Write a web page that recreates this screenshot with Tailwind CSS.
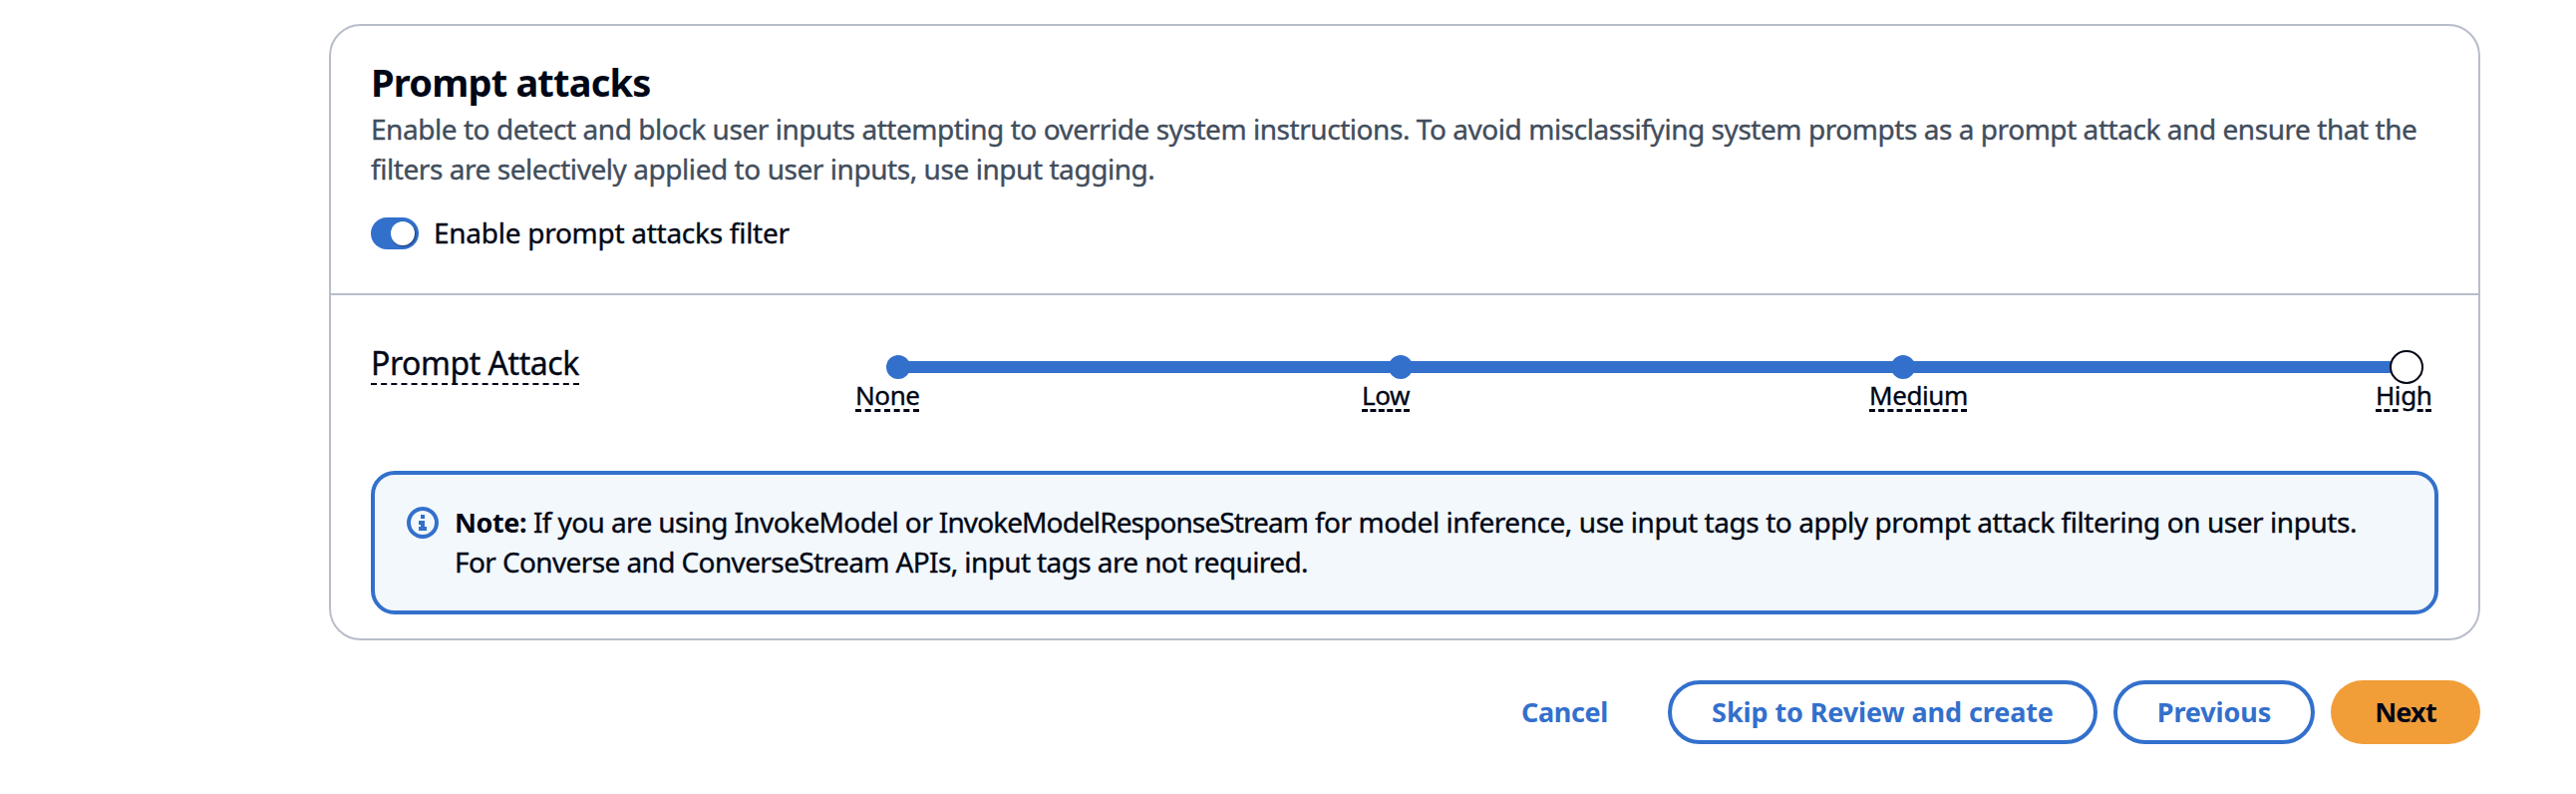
<!DOCTYPE html>
<html lang="en">
<head>
<meta charset="utf-8">
<title>Prompt attacks</title>
<script src="https://cdn.jsdelivr.net/npm/@tailwindcss/browser@4"></script>
</head>
<body class="bg-white font-['Noto_Sans',sans-serif] text-[28px] leading-10 text-[#000716] [-webkit-text-stroke:0.35px]">
<main class="ml-[330px] w-[2158px] pt-6">
  <section class="h-[618px] rounded-[32px] border-2 border-[#b8bdca]">
    <header class="h-[270px] border-b-2 border-[#b8bdca] px-10 pt-8">
      <h2 class="text-[38px] leading-12 font-bold tracking-[-0.8px] whitespace-nowrap [-webkit-text-stroke:0]">Prompt attacks</h2>
      <p class="mt-[3px] text-[#414d5c] whitespace-nowrap"><span class="tracking-[-0.45px]">Enable to detect and block user inputs attempting to override system instructions. To avoid misclassifying system prompts as a prompt attack and ensure that the</span><br><span class="tracking-[-0.44px]">filters are selectively applied to user inputs, use input tagging.</span></p>
      <label class="mt-6 flex items-center">
        <span class="mt-[2px] flex h-8 w-12 items-center justify-end rounded-full bg-[#3370cc] pr-1"><span class="size-6 rounded-full bg-white shadow-[1px_1px_2px_rgba(0,7,22,0.5)]"></span></span>
        <span class="ml-[15px] tracking-[-0.27px]">Enable prompt attacks filter</span>
      </label>
    </header>
    <div class="px-10">
      <div class="flex h-[176px]">
        <div class="w-[486px] shrink-0 pt-[45px]">
          <span class="inline-block h-[45px] border-b-2 border-dashed border-[#000716] text-[32px] leading-[46px] tracking-[-0.45px]">Prompt Attack</span>
        </div>
        <div class="w-[1588px] shrink-0 pt-[55px]">
          <div class="ml-[31px] flex h-[34px] w-[1542px] items-center">
            <div class="size-6 shrink-0 rounded-full bg-[#3370cc]"></div>
            <div class="-mx-1 h-3 w-[488px] shrink-0 bg-[#3370cc]"></div>
            <div class="size-6 shrink-0 rounded-full bg-[#3370cc]"></div>
            <div class="-mx-1 h-3 w-[488px] shrink-0 bg-[#3370cc]"></div>
            <div class="size-6 shrink-0 rounded-full bg-[#3370cc]"></div>
            <div class="-mx-1 h-3 flex-1 bg-[#3370cc]"></div>
            <div class="z-10 size-[34px] shrink-0 rounded-full border-2 border-[#000716] bg-white"></div>
          </div>
          <div class="-mt-[9px] grid grid-cols-[508px_509px_508px_63px] text-[26px] tracking-[-0.4px]">
            <span><span class="underline decoration-dashed decoration-[3px] underline-offset-4">None</span></span>
            <span><span class="underline decoration-dashed decoration-[3px] underline-offset-4">Low</span></span>
            <span><span class="underline decoration-dashed decoration-[3px] underline-offset-4">Medium</span></span>
            <span><span class="underline decoration-dashed decoration-[3px] underline-offset-4">High</span></span>
          </div>
        </div>
      </div>
      <div class="flex h-36 rounded-3xl border-4 border-[#3370cc] bg-[#f3f8fc] pt-[27px] pl-8">
        <svg class="mt-[5px] size-8 shrink-0" viewBox="0 0 32 32" fill="#3370cc"><circle cx="16" cy="16" r="14" fill="none" stroke="#3370cc" stroke-width="4"/><path d="M14 8h4v4h-4zM12 14h6v6h2v4h-8v-4h2v-2h-2z"/></svg>
        <p class="ml-[16px] whitespace-nowrap"><b class="text-[27px] leading-none font-bold tracking-[-0.4px] [-webkit-text-stroke:0]">Note:</b><span class="tracking-[-0.6px]"> If you are using InvokeModel or </span><span class="tracking-[-0.9px]">InvokeModelResponseStream</span><span class="tracking-[-0.44px]"> for model inference, use input tags to apply prompt attack filtering on user inputs.</span><br><span class="tracking-[-0.61px]">For Converse and ConverseStream APIs, input tags are not required.</span></p>
      </div>
    </div>
  </section>
  <footer class="mt-10 flex justify-end gap-4 text-[27px] font-bold whitespace-nowrap text-[#3370cc] [-webkit-text-stroke:0]">
    <button class="flex h-16 w-[175px] items-center justify-center pb-[1px] tracking-[-0.4px]">Cancel</button>
    <button class="flex h-16 w-[431px] items-center justify-center rounded-full border-4 border-[#3370cc] pb-[1px] tracking-[-0.1px]">Skip to Review and create</button>
    <button class="flex h-16 w-[202px] items-center justify-center rounded-full border-4 border-[#3370cc] pb-[1px] tracking-[-0.1px]">Previous</button>
    <button class="flex h-16 w-[150px] items-center justify-center rounded-full bg-[#f19e39] pb-[1px] tracking-[-0.8px] text-[#000716]">Next</button>
  </footer>
</main>
</body>
</html>
